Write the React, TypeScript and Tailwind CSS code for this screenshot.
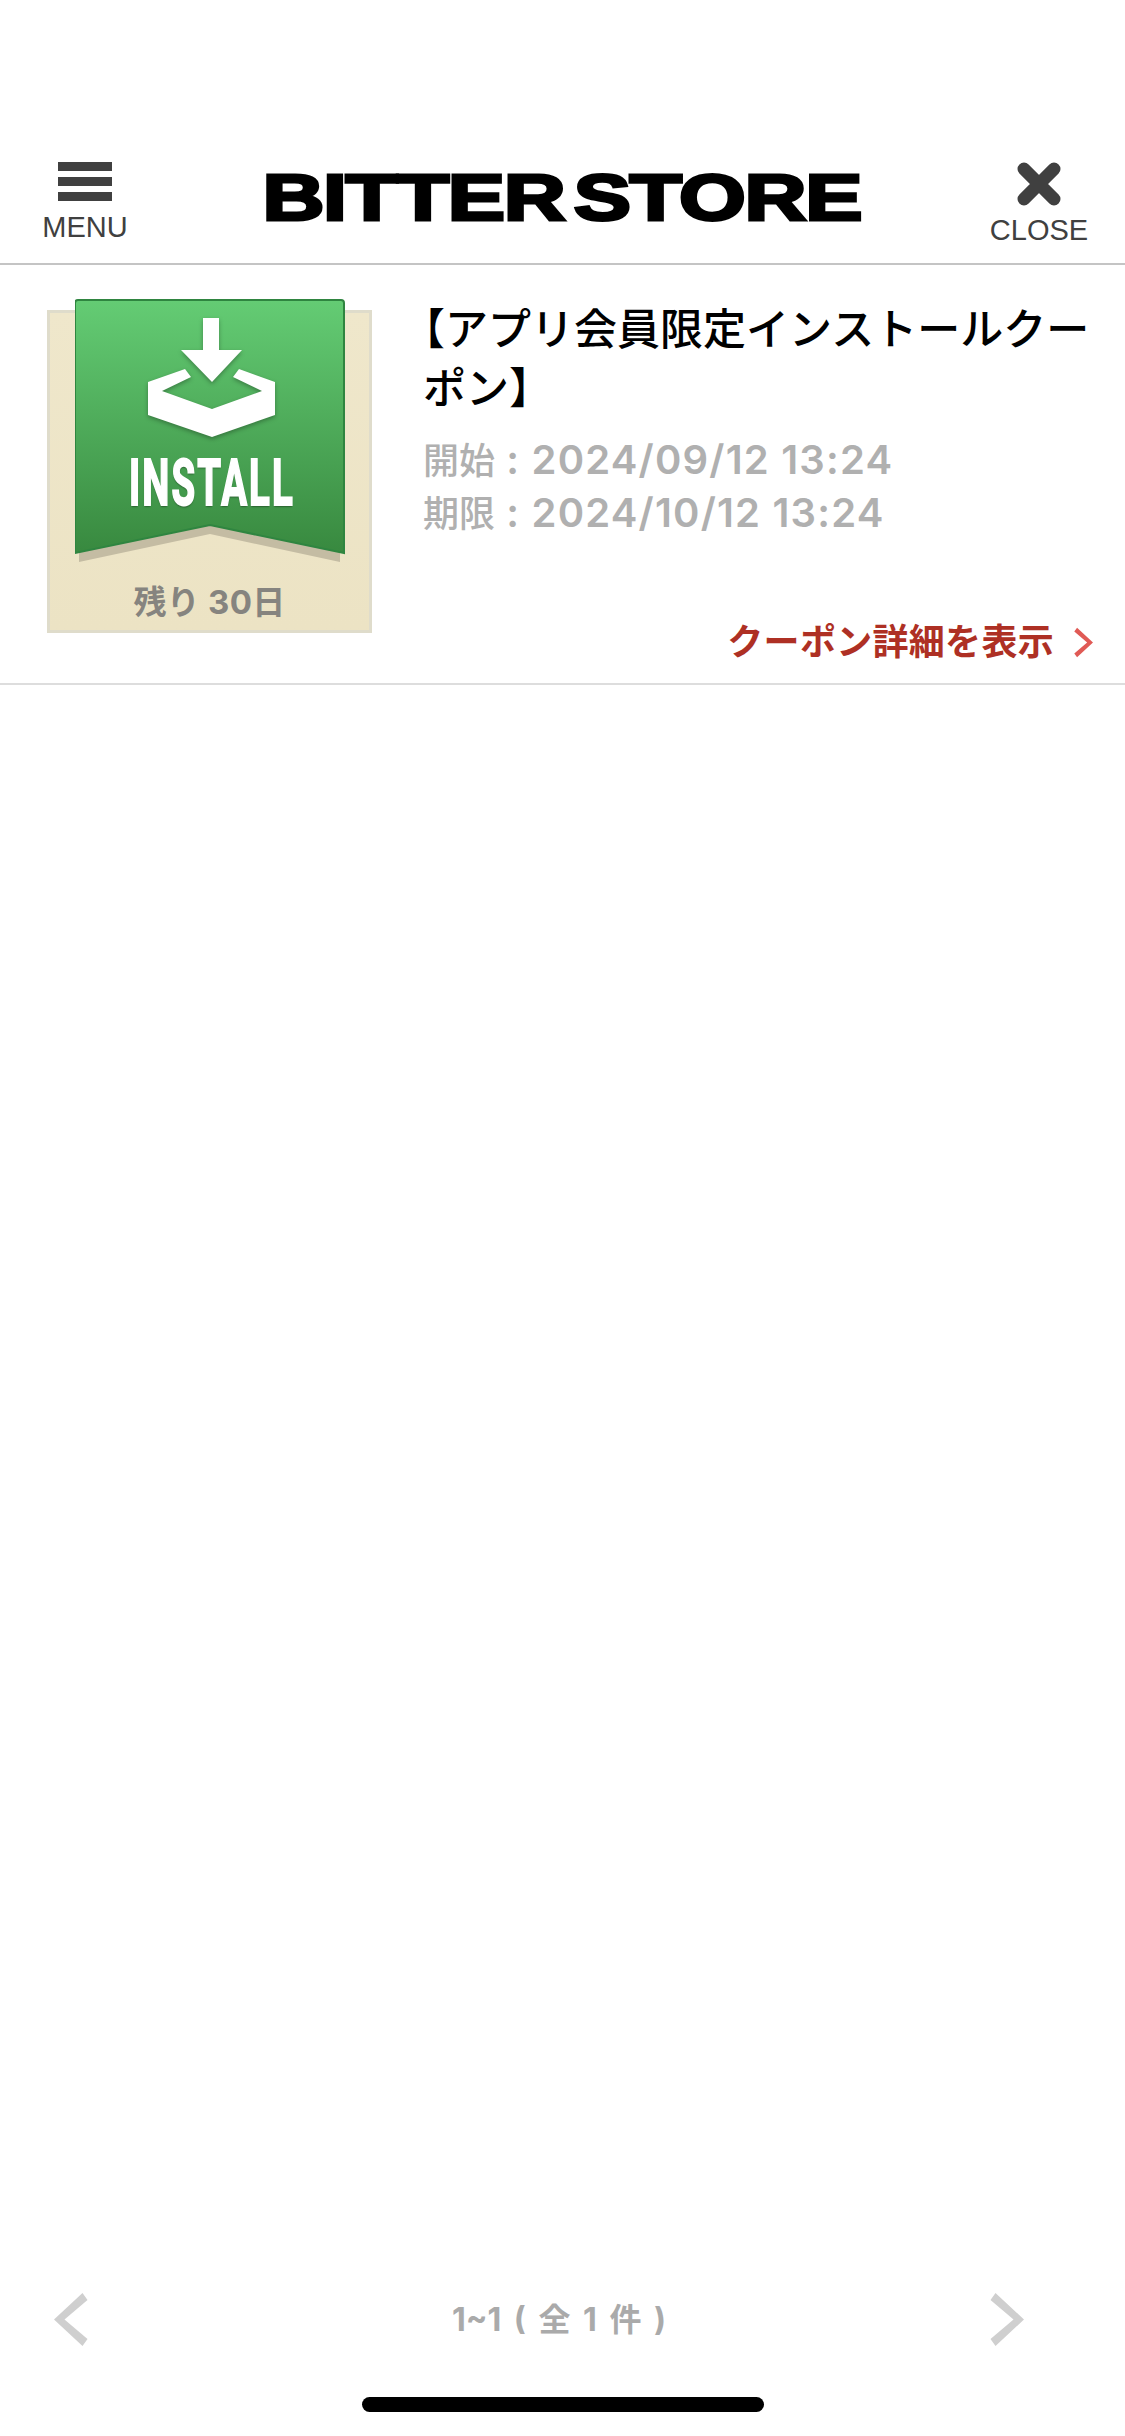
const sans = 'font-["Inter","Noto_Sans_CJK_JP",sans-serif]';

function Chevron({ dir, className }: { dir: 'left' | 'right'; className: string }) {
  return (
    <svg className={className} viewBox="0 0 34 53" fill="currentColor">
      {dir === 'left' ? (
        <polygon points="28.5,0 33.5,7 10.5,26.5 33.5,46 28.5,53 0,26.5" />
      ) : (
        <polygon points="5.5,0 0.5,7 23.5,26.5 0.5,46 5.5,53 34,26.5" />
      )}
    </svg>
  );
}

function InstallBadge() {
  return (
    <div className="relative w-[325px] h-[323px] mt-[10px] bg-gradient-to-b from-[#efe7cb] to-[#ece3c4] border-[3px] border-[#dfdccb]">
      <svg className="absolute left-[25px] top-[-14px]" width="272" height="270" viewBox="0 0 272 270">
        <defs>
          <linearGradient id="ribbon" x1="0" y1="0" x2="0" y2="1">
            <stop offset="0" stopColor="#64cc74" />
            <stop offset="1" stopColor="#38893f" />
          </linearGradient>
        </defs>
        <path d="M4 10 H265 V263 L135 235 L4 263 Z" fill="#c4bca3" />
        <path
          d="M3 1 H266 Q269 1 269 4 V254 L135 226 L0 254 V4 Q0 1 3 1 Z"
          fill="url(#ribbon)"
          stroke="#2f8540"
          strokeWidth="2"
        />
        <g className="drop-shadow-[0_2px_2px_rgba(0,0,0,0.3)]">
          <path d="M128 19 H144 V51 H167 L137 83 L106 51 H128 Z" fill="#fff" />
          <path
            d="M110 70 L116 78 L87 92 L137 110 L187 92 L158 78 L164 70 L200 83 V116 L137 138 L73 116 V83 Z"
            fill="#fff"
          />
        </g>
      </svg>
      <span className='absolute left-[79px] top-[139px] font-["Roboto",sans-serif] font-bold text-[64px] leading-none tracking-[3.5px] text-white [-webkit-text-stroke:2px_white] [text-shadow:0_2px_2px_rgba(0,0,0,0.35)] [transform:scaleX(0.6)] origin-left'>
        INSTALL
      </span>
      <span className="absolute inset-x-0 bottom-[11px] text-center font-bold text-[33px] tracking-[0.3px] leading-none text-[#86847f]">
        残り 30日
      </span>
    </div>
  );
}

function DateRow({ label, value }: { label: string; value: string }) {
  return (
    <p className="text-[40px] leading-[51px] font-semibold tracking-[1.2px] text-[#b0b0b0] whitespace-nowrap">
      <span className="text-[36px] tracking-normal font-medium">{label}</span> : {value}
    </p>
  );
}

export default function App() {
  return (
    <div className={`flex flex-col w-[1125px] h-[2436px] bg-white ${sans}`}>
      <header className="flex items-start justify-between h-[265px] pt-[162px] pl-[42px] pr-[37px] border-b-2 border-[#c4c4c4]">
        <div className='flex flex-col items-center w-[86px] font-["Liberation_Sans",sans-serif]'>
          <div className="flex flex-col gap-[6px] w-[54px]">
            <div className="h-[9px] bg-[#404040]" />
            <div className="h-[9px] bg-[#404040]" />
            <div className="h-[9px] bg-[#404040]" />
          </div>
          <span className="mt-[9px] text-[29px] leading-[34px] text-[#404040]">MENU</span>
        </div>

        <div className='mt-[3px] ml-[6px] font-["Liberation_Sans",sans-serif] font-bold text-[65px] leading-[65px] tracking-[-1px] [word-spacing:-10px] text-black whitespace-nowrap [-webkit-text-stroke:3px_black] [transform:scaleX(1.32)]'>
          BITTER STORE
        </div>

        <div className='flex flex-col items-center w-[98px] font-["Liberation_Sans",sans-serif]'>
          <svg width="44" height="44" viewBox="0 0 44 44">
            <path d="M7 7 L37 37 M37 7 L7 37" stroke="#404040" strokeWidth="13" strokeLinecap="round" />
          </svg>
          <span className="mt-[7px] text-[29px] leading-[34px] text-[#404040]">CLOSE</span>
        </div>
      </header>

      <section className="flex h-[420px] pl-[47px] pr-[30px] pt-[35px] pb-[16px] border-b-2 border-[#dddddd]">
        <InstallBadge />
        <div className="flex flex-col flex-1 pl-[51px]">
          <h2 className="text-[43px] leading-[59px] font-medium text-black [text-indent:-21px]">
            【アプリ会員限定インストールクーポン】
          </h2>
          <div className="mt-[16px]">
            <DateRow label="開始" value="2024/09/12 13:24" />
            <DateRow label="期限" value="2024/10/12 13:24" />
          </div>
          <div className="flex items-center justify-end gap-[20px] mt-auto">
            <span className="text-[36px] tracking-[0.3px] leading-[50px] font-semibold text-[#ae3024]">クーポン詳細を表示</span>
            <Chevron dir="right" className="w-[19px] h-[31px] text-[#e05a55] mr-[2px]" />
          </div>
        </div>
      </section>

      <footer className="mt-auto flex flex-col items-center">
        <div className="flex items-center justify-between w-full pl-[54px] pr-[101px]">
          <Chevron dir="left" className="w-[34px] h-[53px] text-[#cfcfcf]" />
          <span className="ml-[40px] text-[32px] leading-[40px] font-bold [word-spacing:5px] text-[#aaaaaa]">1~1 ( 全 1 件 )</span>
          <Chevron dir="right" className="w-[34px] h-[53px] text-[#cfcfcf]" />
        </div>
        <div className="mt-[51px] mb-[24px] w-[402px] h-[15px] rounded-full bg-black" />
      </footer>
    </div>
  );
}
